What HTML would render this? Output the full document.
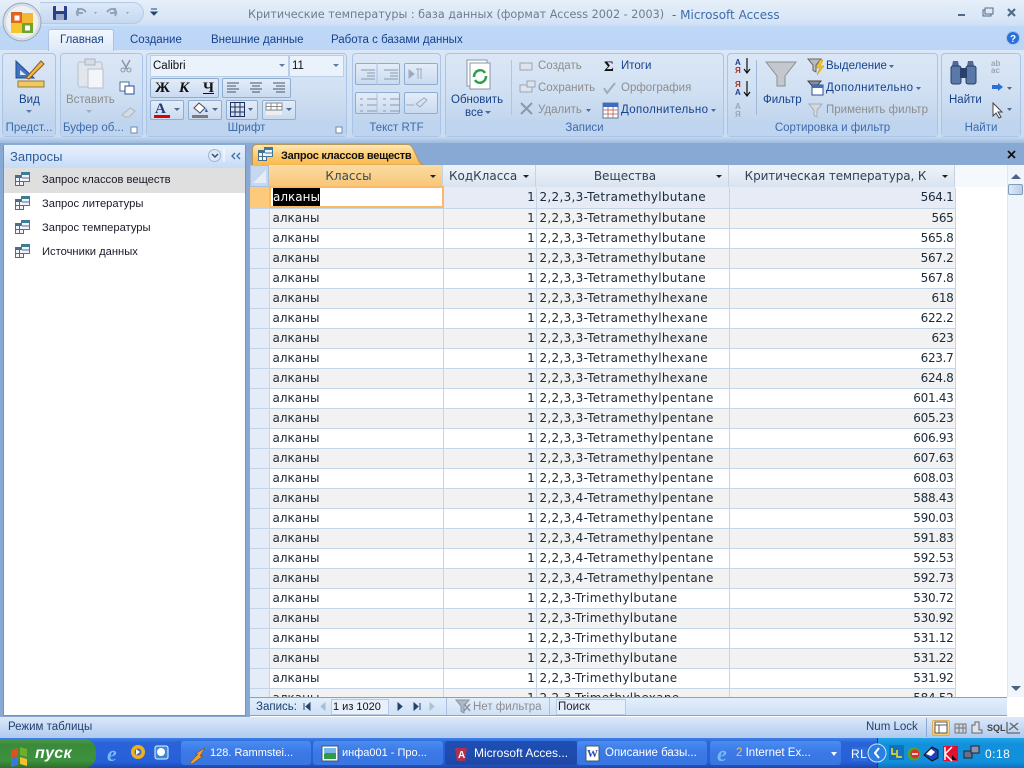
<!DOCTYPE html>
<html><head><meta charset="utf-8"><style>
html,body{margin:0;padding:0;width:1024px;height:768px;overflow:hidden;background:#fff}
body{font-family:"DejaVu Sans","Liberation Sans",sans-serif;font-size:11px;position:relative}
div{box-sizing:border-box}
.a{position:absolute}
.t{position:absolute;white-space:nowrap;color:#15428b;font:11.5px/14px "Liberation Sans",sans-serif}
.d{color:#8d8d8d}
.k{color:#111}
.g{position:absolute;top:53px;height:84px;border:1px solid #a9c4e4;border-radius:4px;background:linear-gradient(#dbe7f6,#cfdff2 50%,#c2d6ee 80%,#c9dcf2)}
.g .l{position:absolute;left:0;right:0;bottom:0;height:15px;background:#bfd5ef;text-align:center;color:#3e6aaa;font:11.5px/15px "Liberation Sans",sans-serif;white-space:nowrap;overflow:hidden}
.b{position:absolute;border:1px solid #8fadd0;border-radius:2px;background:linear-gradient(#e4edf8,#cadbf0)}
table{border-collapse:collapse;table-layout:fixed;position:absolute;left:0;top:1px}
td{height:20px;padding:0 1px 0 3px;border-right:1px solid #c5d5e9;border-bottom:1px solid #c5d5e9;font-size:12px;line-height:19px;color:#1a2a3a;white-space:nowrap;overflow:hidden;box-sizing:border-box;background:#fff}
td.v{letter-spacing:.3px}
tr:nth-child(even) td{background:#f2f2f2}
td.s{background:#e3ecf7!important;padding:0}
td.r{text-align:right;letter-spacing:-.3px}
.h{position:absolute;top:165px;height:22px;border-right:1px solid #c4d3e6;background:linear-gradient(#eff4fa,#d8e3f0);text-align:center;font-size:12px;line-height:22px;color:#333f50}
.h i{position:absolute;right:6px;top:10px;width:0;height:0;border:3px solid transparent;border-top:3px solid #222;border-bottom:0}
.n{position:absolute;left:42px;font:11.2px/14px "Liberation Sans",sans-serif;color:#1a1a2a;white-space:nowrap}
.task{position:absolute;top:741px;height:24px;border-radius:3px;background:linear-gradient(#4a8cf0,#3a78e6 50%,#3a76e0);color:#fff;font:11.5px/25px "Liberation Sans",sans-serif;white-space:nowrap;overflow:hidden}
.ar{position:absolute;width:0;height:0;border:3px solid transparent;border-top:3px solid #5a7ca8;border-bottom:0}
</style></head><body>

<!-- title + tabs background -->
<div class="a" style="left:0;top:0;width:1024px;height:26px;background:linear-gradient(#e6eff9,#dbe8f7 60%,#cfe0f5)"></div>
<div class="a" style="left:0;top:26px;width:1024px;height:27px;background:linear-gradient(#bfd8f8,#bcd5f6)"></div>
<div class="a" style="left:0;top:50px;width:1024px;height:91px;background:linear-gradient(#dbe7f6,#c8dbf2)"></div>
<div class="a" style="left:0;top:137px;width:1024px;height:6px;background:linear-gradient(#c5d9f1,#9db9dc)"></div>
<div class="a" style="left:0;top:143px;width:1024px;height:574px;background:#87a9d4"></div>

<div class="a" style="left:40px;top:2px;width:104px;height:22px;border:1px solid #b3cae6;border-left:0;border-radius:0 11px 11px 0;background:linear-gradient(#dce9f8,#c4d8f1)"></div>
<div class="t" style="left:248px;top:8px;font:11.2px/14px 'DejaVu Sans',sans-serif;color:#6d7c8e">Критические температуры : база данных (формат Access 2002 - 2003)</div>
<div class="t" style="left:672px;top:8px;font:12px/14px 'DejaVu Sans',sans-serif;color:#3d6ea8">- Microsoft Access</div>

<div class="a" style="left:48px;top:29px;width:66px;height:22px;border:1px solid #a8c3e3;border-bottom:0;border-radius:3px 3px 0 0;background:linear-gradient(#f3f8fd,#dde9f7)"></div>
<div class="t" style="left:60px;top:33px;">Главная</div>
<div class="t" style="left:130px;top:33px;">Создание</div>
<div class="t" style="left:211px;top:33px;">Внешние данные</div>
<div class="t" style="left:331px;top:33px;">Работа с базами данных</div>

<!-- groups -->
<div class="g" style="left:2px;width:54px"><div class="l">Предст...</div></div>
<div class="g" style="left:60px;width:83px"><div class="l" style="text-align:left;padding-left:2px">Буфер об...</div></div>
<div class="g" style="left:146px;width:201px"><div class="l">Шрифт</div></div>
<div class="g" style="left:352px;width:89px"><div class="l">Текст RTF</div></div>
<div class="g" style="left:445px;width:279px"><div class="l">Записи</div></div>
<div class="g" style="left:727px;width:211px"><div class="l">Сортировка и фильтр</div></div>
<div class="g" style="left:941px;width:80px"><div class="l">Найти</div></div>

<!-- ribbon labels -->
<div class="t" style="left:19px;top:93px">Вид</div>
<div class="t d" style="left:66px;top:93px">Вставить</div>
<div class="a" style="left:150px;top:55px;width:139px;height:22px;background:#eaf2fb;border:1px solid #b9cfe8"></div>
<div class="a" style="left:289px;top:55px;width:55px;height:22px;background:#eaf2fb;border:1px solid #b9cfe8"></div>
<div class="t k" style="left:153px;top:59px">Calibri</div>
<div class="t k" style="left:292px;top:59px">11</div>
<div class="ar" style="left:279px;top:64px"></div><div class="ar" style="left:333px;top:64px"></div>

<div class="b" style="left:150px;top:78px;width:69px;height:20px"></div>
<div class="t k" style="left:155px;top:81px;font:bold 15px/14px 'Liberation Serif',serif">Ж</div>
<div class="t k" style="left:179px;top:81px;font:italic bold 15px/14px 'Liberation Serif',serif">К</div>
<div class="t k" style="left:203px;top:81px;font:bold 15px/14px 'Liberation Serif',serif;text-decoration:underline">Ч</div>
<div class="b" style="left:222px;top:78px;width:69px;height:20px"></div>
<div class="b" style="left:150px;top:100px;width:34px;height:20px"></div>
<div class="b" style="left:188px;top:100px;width:34px;height:20px"></div>
<div class="b" style="left:226px;top:100px;width:32px;height:20px"></div>
<div class="b" style="left:262px;top:100px;width:34px;height:20px"></div>
<div class="t" style="left:155px;top:102px;font:bold 15px/14px 'Liberation Serif',serif;color:#223a7a">А</div>

<div class="b" style="left:355px;top:63px;width:45px;height:22px"></div>
<div class="b" style="left:404px;top:63px;width:34px;height:22px"></div>
<div class="b" style="left:355px;top:92px;width:45px;height:22px"></div>
<div class="b" style="left:404px;top:92px;width:34px;height:22px"></div>

<div class="t" style="left:451px;top:93px">Обновить</div>
<div class="t" style="left:465px;top:106px">все</div>
<div class="t d" style="left:538px;top:59px">Создать</div>
<div class="t d" style="left:538px;top:81px">Сохранить</div>
<div class="t d" style="left:538px;top:103px">Удалить</div>
<div class="t" style="left:621px;top:59px">Итоги</div>
<div class="t d" style="left:621px;top:81px">Орфография</div>
<div class="t" style="left:621px;top:103px;letter-spacing:.35px">Дополнительно</div>
<div class="t" style="left:763px;top:93px">Фильтр</div>
<div class="t" style="left:826px;top:59px">Выделение</div>
<div class="t" style="left:826px;top:81px;letter-spacing:.35px">Дополнительно</div>
<div class="t d" style="left:826px;top:103px">Применить фильтр</div>
<div class="t" style="left:949px;top:93px">Найти</div>
<div class="a" style="left:756px;top:60px;width:1px;height:55px;background:#9fb8d6"></div>
<div class="a" style="left:511px;top:60px;width:1px;height:55px;background:#b0c6e0"></div>

<!-- nav pane -->
<div class="a" style="left:3px;top:145px;width:243px;height:571px;background:#fff;border:1px solid #6f94c4;border-top:0"></div>
<div class="a" style="left:4px;top:145px;width:241px;height:23px;background:linear-gradient(#e9f2fd,#c6dbf6)"></div>
<div class="t" style="left:10px;top:150px;font-size:13px;color:#2f5d9a">Запросы</div>
<div class="a" style="left:208px;top:149px;width:13px;height:13px;border-radius:50%;border:1px solid #9db5d4;background:#dfe9f6"></div>
<div class="a" style="left:4px;top:168px;width:241px;height:25px;background:#dfdfdf"></div>
<div class="n" style="top:173px">Запрос классов веществ</div>
<div class="n" style="top:197px">Запрос литературы</div>
<div class="n" style="top:221px">Запрос температуры</div>
<div class="n" style="top:245px">Источники данных</div>

<!-- doc area -->
<div class="a" style="left:250px;top:165px;width:774px;height:552px;background:#fff"></div>
<svg class="a" style="left:250px;top:143px" width="180" height="23" viewBox="0 0 180 23"><defs><linearGradient id="tb" x1="0" y1="0" x2="0" y2="1"><stop offset="0" stop-color="#fde9b8"/><stop offset=".6" stop-color="#fdc766"/><stop offset="1" stop-color="#fbb94f"/></linearGradient></defs><path d="M2.500 22.500V6q0-4.500 4.500-4.500H158q3 0 5.500 5l5 11q2 4.500 7 4.500z" fill="url(#tb)" stroke="#b8975c"/></svg>
<div class="t" style="left:281px;top:149px;color:#111;font:bold 11px/14px 'Liberation Sans',sans-serif;letter-spacing:-.25px">Запрос классов веществ</div>

<!-- data grid -->
<div class="a" style="left:250px;top:165px;width:19px;height:22px;background:#c6d8f0;border:1px solid #a8c0e0"></div>
<div class="h" style="left:269px;width:174px;background:linear-gradient(#fbdca2,#f8c576);padding-right:14px;color:#3a4a50">Классы<i></i></div>
<div class="h" style="left:443px;width:93px;text-align:left;padding-left:6px">КодКласса<i></i></div>
<div class="h" style="left:536px;width:193px;padding-right:14px">Вещества<i></i></div>
<div class="h" style="left:729px;width:226px;padding-right:12px;letter-spacing:-.1px">Критическая температура, К<i></i></div>
<div class="h" style="left:955px;width:52px;background:#f5f8fd;border-right:0"></div>

<div class="a" style="left:250px;top:187px;width:757px;height:510px;overflow:hidden;background:#fff">
<div class="a" style="left:0;top:0;width:19px;height:1px;background:#fdc97a"></div>
<div class="a" style="left:193px;top:0;width:512px;height:1px;background:#e6ebf5"></div>
<table style="width:705px"><colgroup><col style="width:19px"><col style="width:174px"><col style="width:93px"><col style="width:193px"><col style="width:226px"></colgroup>
<tr><td class="s" style="background:#fdc97a!important"></td><td></td><td class="r" style="background:#e6ebf5">1</td><td class="v" style="background:#e6ebf5">2,2,3,3-Tetramethylbutane</td><td class="r" style="background:#e6ebf5">564.1</td></tr>
<tr><td class="s"></td><td>алканы</td><td class="r">1</td><td class="v">2,2,3,3-Tetramethylbutane</td><td class="r">565</td></tr>
<tr><td class="s"></td><td>алканы</td><td class="r">1</td><td class="v">2,2,3,3-Tetramethylbutane</td><td class="r">565.8</td></tr>
<tr><td class="s"></td><td>алканы</td><td class="r">1</td><td class="v">2,2,3,3-Tetramethylbutane</td><td class="r">567.2</td></tr>
<tr><td class="s"></td><td>алканы</td><td class="r">1</td><td class="v">2,2,3,3-Tetramethylbutane</td><td class="r">567.8</td></tr>
<tr><td class="s"></td><td>алканы</td><td class="r">1</td><td class="v">2,2,3,3-Tetramethylhexane</td><td class="r">618</td></tr>
<tr><td class="s"></td><td>алканы</td><td class="r">1</td><td class="v">2,2,3,3-Tetramethylhexane</td><td class="r">622.2</td></tr>
<tr><td class="s"></td><td>алканы</td><td class="r">1</td><td class="v">2,2,3,3-Tetramethylhexane</td><td class="r">623</td></tr>
<tr><td class="s"></td><td>алканы</td><td class="r">1</td><td class="v">2,2,3,3-Tetramethylhexane</td><td class="r">623.7</td></tr>
<tr><td class="s"></td><td>алканы</td><td class="r">1</td><td class="v">2,2,3,3-Tetramethylhexane</td><td class="r">624.8</td></tr>
<tr><td class="s"></td><td>алканы</td><td class="r">1</td><td class="v">2,2,3,3-Tetramethylpentane</td><td class="r">601.43</td></tr>
<tr><td class="s"></td><td>алканы</td><td class="r">1</td><td class="v">2,2,3,3-Tetramethylpentane</td><td class="r">605.23</td></tr>
<tr><td class="s"></td><td>алканы</td><td class="r">1</td><td class="v">2,2,3,3-Tetramethylpentane</td><td class="r">606.93</td></tr>
<tr><td class="s"></td><td>алканы</td><td class="r">1</td><td class="v">2,2,3,3-Tetramethylpentane</td><td class="r">607.63</td></tr>
<tr><td class="s"></td><td>алканы</td><td class="r">1</td><td class="v">2,2,3,3-Tetramethylpentane</td><td class="r">608.03</td></tr>
<tr><td class="s"></td><td>алканы</td><td class="r">1</td><td class="v">2,2,3,4-Tetramethylpentane</td><td class="r">588.43</td></tr>
<tr><td class="s"></td><td>алканы</td><td class="r">1</td><td class="v">2,2,3,4-Tetramethylpentane</td><td class="r">590.03</td></tr>
<tr><td class="s"></td><td>алканы</td><td class="r">1</td><td class="v">2,2,3,4-Tetramethylpentane</td><td class="r">591.83</td></tr>
<tr><td class="s"></td><td>алканы</td><td class="r">1</td><td class="v">2,2,3,4-Tetramethylpentane</td><td class="r">592.53</td></tr>
<tr><td class="s"></td><td>алканы</td><td class="r">1</td><td class="v">2,2,3,4-Tetramethylpentane</td><td class="r">592.73</td></tr>
<tr><td class="s"></td><td>алканы</td><td class="r">1</td><td class="v">2,2,3-Trimethylbutane</td><td class="r">530.72</td></tr>
<tr><td class="s"></td><td>алканы</td><td class="r">1</td><td class="v">2,2,3-Trimethylbutane</td><td class="r">530.92</td></tr>
<tr><td class="s"></td><td>алканы</td><td class="r">1</td><td class="v">2,2,3-Trimethylbutane</td><td class="r">531.12</td></tr>
<tr><td class="s"></td><td>алканы</td><td class="r">1</td><td class="v">2,2,3-Trimethylbutane</td><td class="r">531.22</td></tr>
<tr><td class="s"></td><td>алканы</td><td class="r">1</td><td class="v">2,2,3-Trimethylbutane</td><td class="r">531.92</td></tr>
<tr><td class="s"></td><td>алканы</td><td class="r">1</td><td class="v">2,2,3-Trimethylhexane</td><td class="r">584.52</td></tr>
</table>
</div>
<div class="a" style="left:269px;top:186px;width:175px;height:22px;border:2px solid #fdb863;background:#fff"></div>
<div class="a" style="left:273px;top:188px;width:47px;height:18px;background:#000;color:#fff;font-size:12px;line-height:18px">алканы</div>

<!-- scrollbar -->
<div class="a" style="left:1007px;top:165px;width:17px;height:532px;background:#f0f4fb;border-left:1px solid #dfe7f2"></div>
<div class="a" style="left:1008px;top:184px;width:15px;height:11px;border:1px solid #7f9db9;border-radius:2px;background:linear-gradient(90deg,#dce8f7,#b9cee9)"></div>
<div class="a" style="left:1011px;top:174px;width:0;height:0;border:5px solid transparent;border-bottom:5px solid #4d6185;border-top:0"></div>
<div class="a" style="left:1011px;top:686px;width:0;height:0;border:5px solid transparent;border-top:5px solid #4d6185;border-bottom:0"></div>

<!-- record nav -->
<div class="a" style="left:250px;top:697px;width:757px;height:19px;background:linear-gradient(#e2eefb,#cfe1f6);border-top:1px solid #7ea3d1;border-bottom:1px solid #7ea3d1"></div>
<div class="t" style="left:256px;top:700px;color:#1d3f70">Запись:</div>
<div class="a" style="left:331px;top:699px;width:58px;height:16px;background:#e8f1fb;border:1px solid #b5cbe5"></div>
<div class="t k" style="left:333px;top:700px;font-size:11px">1 из 1020</div>
<div class="t d" style="left:473px;top:700px">Нет фильтра</div>
<div class="a" style="left:446px;top:698px;width:1px;height:17px;background:#a9c1df"></div>
<div class="a" style="left:549px;top:698px;width:1px;height:17px;background:#a9c1df"></div>
<div class="a" style="left:556px;top:699px;width:70px;height:16px;background:#e5effa;border:1px solid #b5cbe5"></div>
<div class="t" style="left:558px;top:700px;color:#223">Поиск</div>

<!-- status bar -->
<div class="a" style="left:0;top:717px;width:1024px;height:21px;background:linear-gradient(#dbe8f9,#c6daf5 50%,#b0cbef)"></div>
<div class="t" style="left:8px;top:720px;color:#22406e">Режим таблицы</div>
<div class="t" style="left:866px;top:720px;color:#22406e">Num Lock</div>
<div class="a" style="left:926px;top:718px;width:1px;height:19px;background:#8aa8d0"></div>
<div class="a" style="left:932px;top:720px;width:18px;height:16px;background:linear-gradient(#fde7ae,#fbcb6d);border:1px solid #d9ae62;border-radius:2px"></div>
<div class="t" style="left:987px;top:722px;font:bold 9px/12px 'Liberation Sans',sans-serif;color:#444">SQL</div>

<!-- taskbar -->
<div class="a" style="left:0;top:738px;width:1024px;height:30px;background:linear-gradient(#3f80ea,#2a63d8 15%,#2660d8 80%,#1c47b0)"></div>
<div class="a" style="left:0;top:739px;width:96px;height:29px;border-radius:0 12px 12px 0;background:linear-gradient(#4b9a4b,#3a8a3a 20%,#3d913d 75%,#2d6e2d)"></div>
<div class="t" style="left:35px;top:745px;color:#fff;font:italic bold 16px/18px 'Liberation Sans',sans-serif;letter-spacing:.3px">пуск</div>
<div class="task" style="left:181px;width:130px;padding-left:29px;font-size:11px">128. Rammstei...</div>
<div class="task" style="left:313px;width:130px;padding-left:29px;font-size:11px">инфа001 - Про...</div>
<div class="task" style="left:445px;width:132px;padding-left:29px;background:linear-gradient(#1f4fb5,#1d48a8);font-size:12px">Microsoft Acces...</div>
<div class="task" style="left:577px;width:130px;padding-left:28px">Описание базы...</div>
<div class="task" style="left:710px;width:131px;padding-left:26px"><span style="color:#ffc04d">2</span> Internet Ex...</div>
<div class="a" style="left:831px;top:752px;width:0;height:0;border:3px solid transparent;border-top:4px solid #fff;border-bottom:0"></div>
<div class="a" style="left:877px;top:738px;width:147px;height:30px;background:linear-gradient(#1fa6e8,#1390dc 20%,#1290dc 80%,#0f70c0);border-left:1px solid #0c3a90"></div>
<div class="t" style="left:851px;top:747px;color:#fff;background:#2f6cd6;font-size:12px;letter-spacing:.5px">RL</div>
<div class="t" style="left:985px;top:747px;color:#fff;font-size:12px;letter-spacing:.5px">0:18</div>

<!-- icons -->
<svg class="a" style="left:0;top:0" width="1024" height="768" viewBox="0 0 1024 768" fill="none">
<defs>
<g id="q"><rect x="0" y="3" width="9" height="11" fill="#4a6e8a"/><rect x="6" y="0" width="9" height="10" fill="#3f7a96"/><rect x="7" y="3" width="7" height="6" fill="#eef4fa"/><rect x="1" y="6" width="7" height="7" fill="#f2f6fa"/><path d="M1 9.500h7M4.500 6v7M7 6h7" stroke="#4a6e8a"/></g>
<path id="fn" d="M0 0h13l-5 6v7l-3-1.500V6z"/>
</defs>
<!-- office button -->
<circle cx="22" cy="22" r="19" fill="#d6dde6" stroke="#9aa6b4"/><circle cx="22" cy="22" r="16" fill="#eef1f4"/>
<path d="M11 12h11v11H11z" fill="#e0661f"/><path d="M22 13h11v10H22z" fill="#f2b01e" opacity=".9"/><path d="M11 23h11v10H11z" fill="#f7c62c"/><path d="M22 23h11v10H22z" fill="#6fa52b"/>
<rect x="14.500" y="15.500" width="5" height="5" fill="#fff"/><rect x="25" y="25.500" width="5" height="5" fill="#fff"/>
<!-- qat -->
<rect x="53" y="6" width="14" height="14" rx="1" fill="#28408c"/><rect x="56" y="6" width="8" height="5" fill="#dfe6f2"/><rect x="56" y="14" width="8" height="6" fill="#9aa9c8"/>
<path d="M78 16c-3-5 1-9 6-6l2 2M78 8v5h5" stroke="#8fa3bc" stroke-width="2"/><path d="M117 16c3-5-1-9-6-6l-2 2M117 8v5h-5" stroke="#8fa3bc" stroke-width="2" transform="translate(-2 0)"/>
<path d="M94 12l3 0-1.500 2zM126 12l3 0-1.500 2z" fill="#8fa3bc"/><path d="M151 9h6M151 12h6l-3 3z" stroke="#27466e" fill="#27466e"/>
<!-- window buttons -->
<path d="M958 15h7" stroke="#4f6b88" stroke-width="2"/><rect x="983" y="10" width="8" height="6" fill="#dfe8f4" stroke="#4f6b88"/><rect x="985" y="8" width="8" height="6" fill="#dfe8f4" stroke="#4f6b88"/>
<path d="M1008 9l7 7M1015 9l-7 7" stroke="#4f6b88" stroke-width="2.200"/>
<circle cx="1013" cy="38" r="6.500" fill="#2c6fd6" stroke="#9fc0ea"/><text x="1010" y="42" font-family="Liberation Sans" font-weight="bold" font-size="10" fill="#fff">?</text>
<!-- vid -->
<path d="M16 61v17h18z" fill="#3f74c2" stroke="#1f4a92"/><path d="M20 70v5h6z" fill="#dbe7f6"/><path d="M26 78l15-17 3 3-15 15z" fill="#f2b84a" stroke="#8a5a20"/><rect x="18" y="81" width="26" height="6" fill="#efc860" stroke="#9a7a30"/><path d="M26 110l6 0-3 3z" fill="#5a7ca8"/>
<!-- clipboard -->
<rect x="78" y="62" width="24" height="25" rx="2" fill="#e1e6ec" stroke="#b6c0cc"/><rect x="85" y="59" width="10" height="6" fill="#d5dce4" stroke="#aab5c2"/><rect x="88" y="69" width="15" height="19" fill="#f3f5f8" stroke="#b6c0cc"/>
<path d="M86 110l6 0-3 3z" fill="#a0acbc"/>
<path d="M122 60l5 9M130 60l-5 9" stroke="#8c98a6" stroke-width="1.500"/><circle cx="123" cy="70" r="2" stroke="#8c98a6"/><circle cx="129" cy="70" r="2" stroke="#8c98a6"/>
<rect x="120" y="82" width="9" height="9" fill="#fff" stroke="#4a6fa0"/><rect x="125" y="86" width="9" height="8" fill="#fff" stroke="#2a4f90"/>
<path d="M122 115l8-7 5 3-6 6-4 0z" fill="#d7dce2" stroke="#aab5c2"/>
<!-- font -->
<rect x="154" y="115" width="16" height="3" fill="#e00000"/><path d="M174 108l6 0-3 3z" fill="#4d6b90"/><path d="M212 108l6 0-3 3z" fill="#4d6b90"/>
<rect x="192" y="115" width="16" height="3" fill="#7a7a7a"/><path d="M194 108l5-5 6 5-5 5z" fill="#fff" stroke="#445"/><path d="M206 108l2 4h-3z" fill="#2a5fb0"/>
<path d="M230.500 102.500h14v14h-14zM235 102.500v14M240 102.500v14M230.500 107h14M230.500 112h14" stroke="#1c2f5a"/><path d="M248 108l5 0-2.500 3zM286 108l6 0-3 3z" fill="#4d6b90"/>
<rect x="266" y="103" width="16" height="7" fill="#fff" stroke="#8a8a8a"/><path d="M266 106.500h16M271 103v7M277 103v7" stroke="#8a8a8a"/><rect x="266" y="111" width="16" height="4" fill="#eee"/>
<path d="M227 83h12M227 86h9M227 89h12M227 92h9M250 83h12M252 86h8M250 89h12M252 92h8M273 83h12M276 86h9M273 89h12M276 92h9" stroke="#44566e"/>
<rect x="336" y="127" width="6" height="6" fill="#fff" stroke="#6c8ab0"/><rect x="131" y="127" width="6" height="6" fill="#fff" stroke="#6c8ab0"/>
<!-- rtf -->
<path d="M361 70h14M367 73h8M367 76h8M361 79h14M384 70h14M390 73h8M390 76h8M384 79h14M360 99h3M367 99h10M360 105h3M367 105h10M360 111h3M367 111h10M383 99h3M390 99h10M383 105h3M390 105h10M383 111h3M390 111h10" stroke="#8a9ab0"/>
<path d="M409 70l5 4-5 4zM416 69h6M418 69v10M421 69v10" stroke="#9aaac0" fill="#9aaac0"/><path d="M406 105l8 0M416 104l8-6 3 2-7 7z" stroke="#9aaac0"/>
<path d="M377 63v22M377 92v22" stroke="#a9c1df"/>
<!-- refresh -->
<rect x="467" y="60" width="20" height="26" fill="#fff" stroke="#8a96a6"/><rect x="470" y="63" width="20" height="26" fill="#fff" stroke="#8a96a6"/><path d="M474 77c0-7 8-9 11-4M486 76c0 7-8 9-11 4" stroke="#28a048" stroke-width="2.500"/>
<path d="M485 111l6 0-3 3z" fill="#4d6b90"/>
<!-- records -->
<rect x="520" y="63" width="12" height="7" fill="#dde4ee" stroke="#98a6b8"/><rect x="520" y="85" width="12" height="7" fill="#dde4ee" stroke="#98a6b8"/><rect x="527" y="81" width="8" height="6" fill="#dde4ee" stroke="#98a6b8"/>
<path d="M521 103l11 11M532 103l-11 11" stroke="#8a98aa" stroke-width="2"/>
<text x="604" y="71" font-family="Liberation Serif" font-weight="bold" font-size="15" fill="#111">Σ</text>
<path d="M604 88l3 5 8-10" stroke="#a0acbc" stroke-width="2"/>
<rect x="603" y="103" width="15" height="15" fill="#fff" stroke="#5a78a8"/><rect x="603" y="103" width="15" height="4" fill="#3f6cc0"/><path d="M603 110h15M603 114h15M608 107v11M613 107v11" stroke="#c07a6a"/>
<path d="M586 109l5 0-2.500 3zM711 109l5 0-2.500 3zM889 65l5 0-2.500 3zM916 87l5 0-2.500 3z" fill="#4d6b90"/>
<!-- sort -->
<path d="M747 58v14M744 69l3 4 3-4M747 81v14M744 92l3 4 3-4" stroke="#111" stroke-width="1.200"/>
<text x="735" y="65" font-family="Liberation Sans" font-weight="bold" font-size="8" fill="#28408c">А</text><text x="735" y="73" font-family="Liberation Sans" font-weight="bold" font-size="8" fill="#a03028">Я</text>
<text x="735" y="87" font-family="Liberation Sans" font-weight="bold" font-size="8" fill="#a03028">Я</text><text x="735" y="95" font-family="Liberation Sans" font-weight="bold" font-size="8" fill="#28408c">А</text>
<text x="735" y="109" font-family="Liberation Sans" font-weight="bold" font-size="8" fill="#9aa6b6">А</text><text x="735" y="117" font-family="Liberation Sans" font-weight="bold" font-size="8" fill="#9aa6b6">Я</text>
<path d="M766 62h30l-11 14v10h-8V76z" fill="#c4c8cc" stroke="#8a8f95"/>
<use href="#fn" x="808" y="59" fill="#b8bcc0" stroke="#666"/><path d="M820 60l-4 8h4l-3 7 7-9h-4l3-6z" fill="#f5c72e" stroke="#b78a10" stroke-width=".5"/>
<use href="#fn" x="808" y="81" fill="#8a9098" stroke="#444"/><rect x="812" y="85" width="11" height="10" fill="#fff" stroke="#2a4f90"/><rect x="812" y="85" width="11" height="3" fill="#3f6cc0"/>
<use href="#fn" x="809" y="104" fill="#d6dbe0" stroke="#a5aeb8"/>
<!-- find -->
<path d="M952 66l1-5h5l1 5zM967 66l1-5h5l1 5z" fill="#506a94"/><rect x="951" y="66" width="10" height="18" rx="2" fill="#5a78a8" stroke="#27406e"/><rect x="966" y="66" width="10" height="18" rx="2" fill="#5a78a8" stroke="#27406e"/><rect x="960" y="68" width="7" height="10" fill="#27406e"/>
<text x="991" y="66" font-family="Liberation Sans" font-size="8" font-weight="bold" fill="#9aa6b6">ab</text><text x="991" y="73" font-family="Liberation Sans" font-size="8" font-weight="bold" fill="#9aa6b6">ac</text>
<path d="M992 85h6v-2l5 4-5 4v-2h-6z" fill="#2c6fd6"/><path d="M993 103v13l3-3 3 5 2-1-3-5h4z" fill="#fff" stroke="#444"/>
<path d="M1007 87l5 0-2.500 3zM1007 108l5 0-2.500 3z" fill="#4d6b90"/>
<!-- nav -->
<use href="#q" x="15" y="172"/><use href="#q" x="15" y="196"/><use href="#q" x="15" y="220"/><use href="#q" x="15" y="244"/>
<use href="#q" x="258" y="147"/>
<path d="M212 154l3 3 3-3" stroke="#2c4f80" stroke-width="1.500"/><path d="M224 148v14" stroke="#fff"/>
<path d="M235 153l-3 3 3 3M240 153l-3 3 3 3" stroke="#3d6ea8" stroke-width="1.300"/>
<path d="M1008 151l7 7M1015 151l-7 7" stroke="#111" stroke-width="1.800"/>
<!-- corner -->
<path d="M253 183l13-13v13z" fill="#e6edf6"/>
<!-- record nav icons -->
<path d="M304 703v7M310 703l-4 3.500 4 3.500z" stroke="#27406e" fill="#27406e"/><path d="M325 703l-4 3.500 4 3.500z" fill="#a9bcd5" stroke="#a9bcd5"/>
<path d="M398 703l4 3.500-4 3.500zM414 703l4 3.500-4 3.500z" fill="#27406e" stroke="#27406e"/><path d="M420 703v7" stroke="#27406e"/><path d="M430 703l4 3.500-4 3.500z" fill="#b0c0d4" stroke="#b0c0d4"/>
<use href="#fn" x="456" y="700" fill="#b0b8c4" stroke="#8a96a6"/><path d="M464 704l6 7M470 704l-6 7" stroke="#8a96a6" stroke-width="1.500"/>
<!-- status icons -->
<rect x="935" y="722" width="12" height="11" fill="#fff" stroke="#5a5a5a"/><path d="M935 725h12M939 725v8" stroke="#5a5a5a"/>
<rect x="955" y="724" width="11" height="9" fill="#cdd6e2" stroke="#777"/><path d="M959 724v9M963 724v9M955 728h11" stroke="#777"/>
<path d="M972 733v-8h3v-3h4v8h3v3z" fill="#dde4ee" stroke="#666"/>
<path d="M1007 733h13M1007 733v-11M1009 730l9-7M1010 723l8 7" stroke="#666" stroke-width="1.300"/>
<!-- taskbar icons -->
<path d="M11 750l7-2v8l-7 2z" fill="#e0501f"/><path d="M20 747l7 2v8l-7-2z" fill="#6fae2a"/><path d="M11 759l7-2v8l-7 2z" fill="#3a78e0"/><path d="M20 757l7 2v7l-7-2z" fill="#f2c02c"/>
<text x="107" y="761" font-family="Liberation Serif" font-style="italic" font-weight="bold" font-size="22" fill="#7ab8f5">e</text>
<circle cx="138" cy="752" r="7" fill="#f2b01e"/><circle cx="138" cy="752" r="3.500" fill="#3a6fb0"/><path d="M136 749l4 3-4 3z" fill="#fff"/>
<rect x="155" y="746" width="13" height="13" rx="2" fill="#3a8ad8" stroke="#e8f2fc"/><circle cx="161" cy="752" r="4" fill="#fff"/>
<path d="M190 763l8-9h-3l10-6-5 8h3l-11 8z" fill="#f0a030" stroke="#704010" stroke-width=".5"/>
<rect x="322" y="746" width="16" height="15" fill="#fff" stroke="#456"/><path d="M324 754c4-5 8-3 12-1v6h-12z" fill="#2e9a4a"/><rect x="324" y="748" width="12" height="5" fill="#7ab8ea"/>
<path d="M455 748h12l-2 13h-8z" fill="#b03050"/><text x="458" y="758" font-family="Liberation Sans" font-weight="bold" font-size="10" fill="#fff">A</text>
<rect x="586" y="746" width="13" height="15" fill="#fff" stroke="#456"/><text x="587" y="757" font-family="Liberation Serif" font-weight="bold" font-size="11" fill="#2a4fb0">W</text>
<text x="717" y="761" font-family="Liberation Serif" font-style="italic" font-weight="bold" font-size="22" fill="#7ab8f5">e</text>
<circle cx="877" cy="753" r="9" fill="#2a7fe0" stroke="#cfe6ff"/><path d="M879 748l-4 5 4 5" stroke="#fff" stroke-width="2"/>
<rect x="889" y="745" width="15" height="15" fill="#1470b8"/><path d="M892 748v6h4M897 750v7h5" stroke="#f5e02c" stroke-width="1.500"/>
<circle cx="914" cy="754" r="6.500" fill="#5aa02c"/><circle cx="915" cy="754" r="4.500" fill="#d83030"/><path d="M912 754h6" stroke="#fff" stroke-width="1.500"/>
<path d="M924 755l8-8 6 3v8l-6 3z" fill="#1a40c0" stroke="#111"/><path d="M926 754l5-5 4 3-4 4z" fill="#fff"/>
<rect x="943" y="746" width="15" height="15" fill="#e01030"/><path d="M945 747v13M945 754l7-7M945 754l7 7" stroke="#fff" stroke-width="1.500"/><path d="M952 755l5 5-5 0z" fill="#111"/>
<rect x="964" y="751" width="8" height="7" fill="#66708c" stroke="#223"/><rect x="971" y="746" width="8" height="7" fill="#8a94b0" stroke="#223"/>
</svg>
</body></html>
